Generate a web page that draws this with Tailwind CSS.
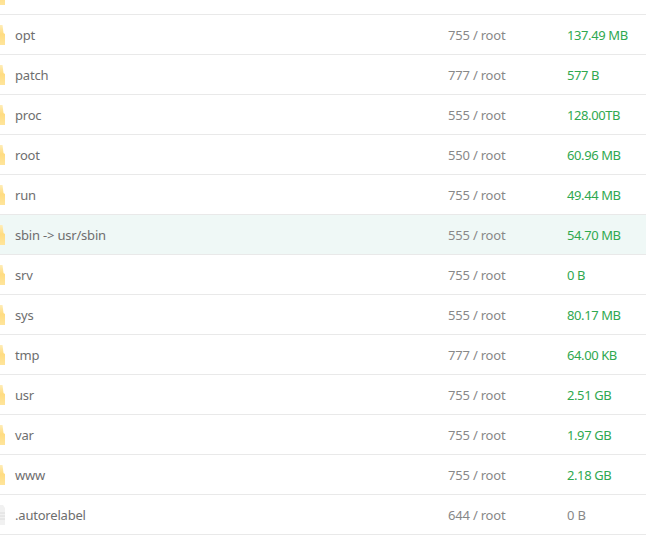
<!DOCTYPE html>
<html lang="en">
<head>
    <meta charset="UTF-8">
    <script src="https://cdn.jsdelivr.net/npm/@tailwindcss/browser@4"></script>
    <title>Files</title>
</head>
<body class="bg-white">
    <svg class="absolute h-0 w-0">
        <defs>
            <linearGradient id="folder-fill" x1="0" y1="0" x2="0" y2="1">
                <stop offset="0" stop-color="#ffedb8"/>
                <stop offset="0.45" stop-color="#ffdc80"/>
                <stop offset="1" stop-color="#ffe59c"/>
            </linearGradient>
        </defs>
        <symbol id="folder" viewBox="0 0 5 20"><path d="M0 0H2.5L3.5 8L5 9V20H0Z" fill="url(#folder-fill)"/></symbol>
        <symbol id="file" viewBox="0 0 5 20"><path d="M0 0H3L5 3V20H0Z" fill="#f1f1f1"/><path d="M0 8H5M0 11H5M0 14H5" stroke="#dcdcdc"/></symbol>
    </svg>
    <div class="h-[550px] overflow-hidden font-['Noto_Sans',sans-serif] text-[13px] leading-5 tracking-[-0.2px] text-[#6e6e6e]">
        <div class="-mt-[25px]">
            <!-- row cut off by the scroll position -->
            <div class="flex h-10 items-center border-b border-[#e9e9e9]">
                <svg class="h-5 w-[5px] shrink-0"><use href="#folder"/></svg>
                <span class="ml-[10px] w-[433px]">mnt</span>
                <span class="w-[119px] text-[#888]">755 / root</span>
                <span class="tracking-[-0.4px] text-[#2fa84f]">4.00 KB</span>
            </div>
            <div class="flex h-10 items-center border-b border-[#e9e9e9]">
                <svg class="h-5 w-[5px] shrink-0"><use href="#folder"/></svg>
                <span class="ml-[10px] w-[433px]">opt</span>
                <span class="w-[119px] text-[#888]">755 / root</span>
                <span class="tracking-[-0.4px] text-[#2fa84f]">137.49 MB</span>
            </div>
            <div class="flex h-10 items-center border-b border-[#e9e9e9]">
                <svg class="h-5 w-[5px] shrink-0"><use href="#folder"/></svg>
                <span class="ml-[10px] w-[433px]">patch</span>
                <span class="w-[119px] text-[#888]">777 / root</span>
                <span class="tracking-[-0.4px] text-[#2fa84f]">577 B</span>
            </div>
            <div class="flex h-10 items-center border-b border-[#e9e9e9]">
                <svg class="h-5 w-[5px] shrink-0"><use href="#folder"/></svg>
                <span class="ml-[10px] w-[433px]">proc</span>
                <span class="w-[119px] text-[#888]">555 / root</span>
                <span class="tracking-[-0.4px] text-[#2fa84f]">128.00TB</span>
            </div>
            <div class="flex h-10 items-center border-b border-[#e9e9e9]">
                <svg class="h-5 w-[5px] shrink-0"><use href="#folder"/></svg>
                <span class="ml-[10px] w-[433px]">root</span>
                <span class="w-[119px] text-[#888]">550 / root</span>
                <span class="tracking-[-0.4px] text-[#2fa84f]">60.96 MB</span>
            </div>
            <div class="flex h-10 items-center border-b border-[#e9e9e9]">
                <svg class="h-5 w-[5px] shrink-0"><use href="#folder"/></svg>
                <span class="ml-[10px] w-[433px]">run</span>
                <span class="w-[119px] text-[#888]">755 / root</span>
                <span class="tracking-[-0.4px] text-[#2fa84f]">49.44 MB</span>
            </div>
            <!-- hovered row -->
            <div class="flex h-10 items-center border-b border-[#e9e9e9] bg-[#eff8f6]">
                <svg class="h-5 w-[5px] shrink-0"><use href="#folder"/></svg>
                <span class="ml-[10px] w-[433px]">sbin -&gt; usr/sbin</span>
                <span class="w-[119px] text-[#888]">555 / root</span>
                <span class="tracking-[-0.4px] text-[#2fa84f]">54.70 MB</span>
            </div>
            <div class="flex h-10 items-center border-b border-[#e9e9e9]">
                <svg class="h-5 w-[5px] shrink-0"><use href="#folder"/></svg>
                <span class="ml-[10px] w-[433px]">srv</span>
                <span class="w-[119px] text-[#888]">755 / root</span>
                <span class="tracking-[-0.4px] text-[#2fa84f]">0 B</span>
            </div>
            <div class="flex h-10 items-center border-b border-[#e9e9e9]">
                <svg class="h-5 w-[5px] shrink-0"><use href="#folder"/></svg>
                <span class="ml-[10px] w-[433px]">sys</span>
                <span class="w-[119px] text-[#888]">555 / root</span>
                <span class="tracking-[-0.4px] text-[#2fa84f]">80.17 MB</span>
            </div>
            <div class="flex h-10 items-center border-b border-[#e9e9e9]">
                <svg class="h-5 w-[5px] shrink-0"><use href="#folder"/></svg>
                <span class="ml-[10px] w-[433px]">tmp</span>
                <span class="w-[119px] text-[#888]">777 / root</span>
                <span class="tracking-[-0.4px] text-[#2fa84f]">64.00 KB</span>
            </div>
            <div class="flex h-10 items-center border-b border-[#e9e9e9]">
                <svg class="h-5 w-[5px] shrink-0"><use href="#folder"/></svg>
                <span class="ml-[10px] w-[433px]">usr</span>
                <span class="w-[119px] text-[#888]">755 / root</span>
                <span class="tracking-[-0.4px] text-[#2fa84f]">2.51 GB</span>
            </div>
            <div class="flex h-10 items-center border-b border-[#e9e9e9]">
                <svg class="h-5 w-[5px] shrink-0"><use href="#folder"/></svg>
                <span class="ml-[10px] w-[433px]">var</span>
                <span class="w-[119px] text-[#888]">755 / root</span>
                <span class="tracking-[-0.4px] text-[#2fa84f]">1.97 GB</span>
            </div>
            <div class="flex h-10 items-center border-b border-[#e9e9e9]">
                <svg class="h-5 w-[5px] shrink-0"><use href="#folder"/></svg>
                <span class="ml-[10px] w-[433px]">www</span>
                <span class="w-[119px] text-[#888]">755 / root</span>
                <span class="tracking-[-0.4px] text-[#2fa84f]">2.18 GB</span>
            </div>
            <div class="flex h-10 items-center border-b border-[#e9e9e9]">
                <svg class="h-5 w-[5px] shrink-0"><use href="#file"/></svg>
                <span class="ml-[10px] w-[433px]">.autorelabel</span>
                <span class="w-[119px] text-[#888]">644 / root</span>
                <span class="text-[#888]">0 B</span>
            </div>
        </div>
    </div>
</body>
</html>
